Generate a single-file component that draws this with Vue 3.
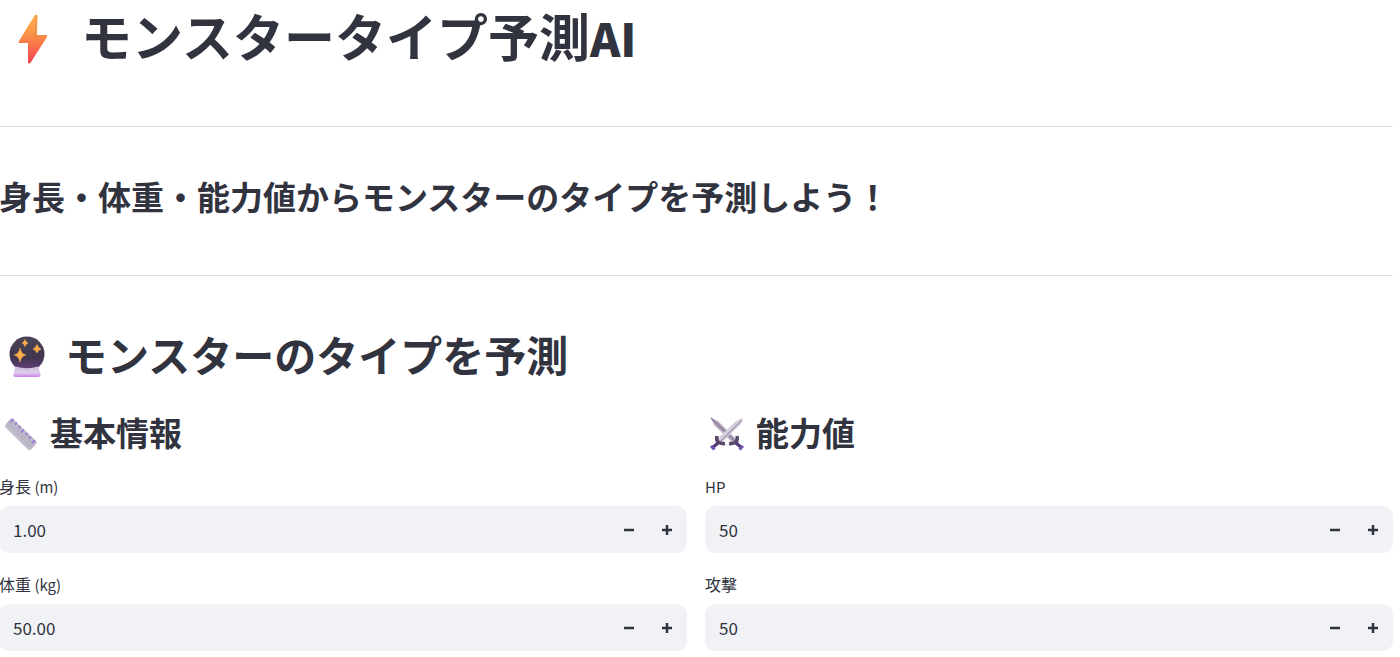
<script setup>
import { reactive } from 'vue'

const columns = reactive([
  {
    title: '基本情報',
    icon: 'ruler',
    fields: [
      { id: 'height', label: '身長', latin: ' (m)', value: '1.00', step: 0.1, digits: 2 },
      { id: 'weight', label: '体重', latin: ' (kg)', value: '50.00', step: 1, digits: 2 },
    ],
  },
  {
    title: '能力値',
    icon: 'swords',
    fields: [
      { id: 'hp', label: '', latin: 'HP', value: '50', step: 1, digits: 0 },
      { id: 'attack', label: '攻撃', latin: '', value: '50', step: 1, digits: 0 },
    ],
  },
])

function change(field, direction) {
  const next = Math.max(0, (Number(field.value) || 0) + direction * field.step)
  field.value = next.toFixed(field.digits)
}
</script>

<template>
  <main class="page">
    <h1 class="title">
      <svg class="bolt" viewBox="-1 -4 66 66" aria-hidden="true">
        <defs>
          <linearGradient id="boltFill" x1="0" y1="0" x2="0" y2="1">
            <stop offset="0" stop-color="#ffb54a" />
            <stop offset="0.4" stop-color="#fb9348" />
            <stop offset="1" stop-color="#f2404f" />
          </linearGradient>
        </defs>
        <path d="M34.5 9.5Q35 8.500 36 8.500Q37.500 8.500 37.500 10L37 29H46Q48 29 47 31L31 56Q30 57.500 29 57.500Q28 57.500 28 56V37H20Q18 37 19 35Z" fill="url(#boltFill)" />
        <path d="M36.200 9L35.500 30H46.500" fill="none" stroke="#df8b49" stroke-width="1" />
      </svg>
      <span>モンスタータイプ予測<span class="title-latin">AI</span></span>
    </h1>
    <hr class="rule" />
    <h3 class="lead">身長・体重・能力値からモンスターのタイプを予測しよう！</h3>
    <hr class="rule" />

    <h2 class="section">
      <svg class="crystal" viewBox="0 -1 54 54" aria-hidden="true">
        <defs>
          <linearGradient id="ballFill" x1="0" y1="0" x2="0" y2="1">
            <stop offset="0" stop-color="#4b4556" />
            <stop offset="0.6" stop-color="#403650" />
            <stop offset="1" stop-color="#684080" />
          </linearGradient>
          <linearGradient id="standFill" x1="0" y1="0" x2="0" y2="1">
            <stop offset="0" stop-color="#c9bdd4" />
            <stop offset="0.6" stop-color="#e0cdec" />
            <stop offset="1" stop-color="#c57fea" />
          </linearGradient>
        </defs>
        <circle cx="28" cy="26" r="17.500" fill="url(#ballFill)" />
        <path d="M16.500 38.500Q28 42 39 38.500L41.500 46Q42 49 39 49H17Q13.500 49 14.500 46Z" fill="url(#standFill)" />
        <path d="M21 20Q22 26 27 27Q22 28 21 34Q20 28 15 27Q20 26 21 20ZM38 16.500Q39 20 42 21Q39 22 38 25Q37 22 34 21Q37 20 38 16.500ZM26 11.500Q27 14.500 29 15Q27 15.500 26 18.500Q25 15.500 23 15Q25 14.500 26 11.500Z" fill="#ffae4b" stroke="#ffae4b" stroke-width="0.500" />
      </svg>
      <span>モンスターのタイプを予測</span>
    </h2>

    <div class="columns">
      <section v-for="column in columns" :key="column.title" class="column">
        <h3 class="subheading">
          <svg v-if="column.icon === 'ruler'" class="small-icon" viewBox="0 -2 42 42" aria-hidden="true">
            <path d="M14 6L37 28Q38.500 29.500 37 31L32 36.500Q30.500 38 29 36.500L6.500 14.500Q5 13 6.500 11.500L11.500 6Q13 4.500 14 6Z" fill="#bbb6c5" />
            <path d="M6 12L30.500 35.500" stroke="#d0ccd5" stroke-width="1" />
            <path d="M14.500 6L11.500 9M18 9.500L16 11.500M21.500 13L19.500 15M25 16.500L22 19.500M28.500 20L26.500 22M32 23.500L30 25.500M36 27L33 30" stroke="#9a74df" stroke-width="1.600" />
          </svg>
          <svg v-else class="small-icon" viewBox="0 -2 42 42" aria-hidden="true">
            <path d="M6 5L13 8L34 29L30 32L9 12Z" fill="#b6adc0" />
            <path d="M6 5L32 30" stroke="#8f7a9d" stroke-width="1.500" />
            <path d="M38 5L31 8L10 28L14 32L36 11Z" fill="#d5d0da" />
            <path d="M37 7L13 31" stroke="#a998b5" stroke-width="1.500" />
            <path d="M12 23Q11 28 14 29.500Q17 31 20 30.500M32 23Q33 28 30 29.500Q27 31 24 30.500" fill="none" stroke="#594868" stroke-width="3.500" />
            <path d="M13 30L7 35M31 30L37 35" stroke="#533b76" stroke-width="3.200" />
            <path d="M6 33L9.500 36.500M38 33L34.500 36.500" stroke="#7051b0" stroke-width="3" />
          </svg>
          <span>{{ column.title }}</span>
        </h3>
        <div v-for="field in column.fields" :key="field.id" class="field">
          <label class="label" :for="field.id">{{ field.label }}<span class="label-latin">{{ field.latin }}</span></label>
          <div class="control">
            <input :id="field.id" v-model="field.value" class="value" type="text" inputmode="decimal" autocomplete="off" />
            <button class="step" type="button" :aria-label="field.label + field.latin + 'を減らす'" @click="change(field, -1)">
              <svg viewBox="0 0 10 10" aria-hidden="true"><path d="M0 5H10" /></svg>
            </button>
            <button class="step" type="button" :aria-label="field.label + field.latin + 'を増やす'" @click="change(field, 1)">
              <svg viewBox="0 0 10 10" aria-hidden="true"><path d="M0 5H10M5 0V10" /></svg>
            </button>
          </div>
        </div>
      </section>
    </div>
  </main>
</template>

<style>
body {
  background: #fff;
}
</style>

<style scoped>
.page {
  margin: 0 7px 0 -1px;
  color: #31333f;
  font-family: "Noto Sans CJK JP", "Noto Sans", sans-serif;
  font-size: 16px;
}
h1,
h2,
h3 {
  display: flex;
  align-items: center;
  margin: 0;
  font-weight: 700;
  white-space: nowrap;
}
svg {
  display: block;
  flex: none;
}
.title {
  gap: 16px;
  font-size: 51px;
  line-height: 70px;
}
.title-latin {
  font-size: 46px;
  font-weight: 900;
  line-height: 1;
}
.bolt {
  width: 66px;
  height: 66px;
}
.rule {
  height: 1px;
  margin: 56px 0 50px;
  border: 0;
  background: #e0e0e3;
}
.lead {
  font-size: 33px;
  line-height: 38px;
}
.lead + .rule {
  margin: 60px 0 51px;
}
.section {
  gap: 12px;
  margin-bottom: 30px;
  font-size: 42px;
  line-height: 54px;
}
.crystal {
  width: 54px;
  height: 54px;
}
.columns {
  display: grid;
  grid-template-columns: 1fr 1fr;
  gap: 18px;
}
.subheading {
  gap: 9px;
  margin-bottom: 21px;
  font-size: 33px;
  line-height: 40px;
}
.small-icon {
  width: 42px;
  height: 42px;
}
.field {
  margin-bottom: 19px;
}
.label {
  display: block;
  margin-bottom: 8px;
  font-size: 16px;
  line-height: 24px;
}
.label-latin {
  font-size: 15px;
  line-height: 1;
  white-space: pre;
}
.control {
  display: flex;
  height: 47px;
  padding-right: 1px;
  overflow: hidden;
  border-radius: 10px;
  background: #f0f2f6;
}
.control:focus-within {
  outline: 1px solid #ff4b4b;
}
.value {
  flex: 1;
  min-width: 0;
  padding: 0 14px;
  border: 0;
  outline: 0;
  background: transparent;
  color: inherit;
  font: inherit;
  font-size: 17px;
}
.step {
  display: flex;
  align-items: center;
  justify-content: center;
  width: 38px;
  padding: 0;
  border: 0;
  background: transparent;
  color: inherit;
  cursor: pointer;
}
.step svg {
  width: 10px;
  height: 10px;
}
.step path {
  fill: none;
  stroke: currentColor;
  stroke-width: 2.500;
}
</style>
